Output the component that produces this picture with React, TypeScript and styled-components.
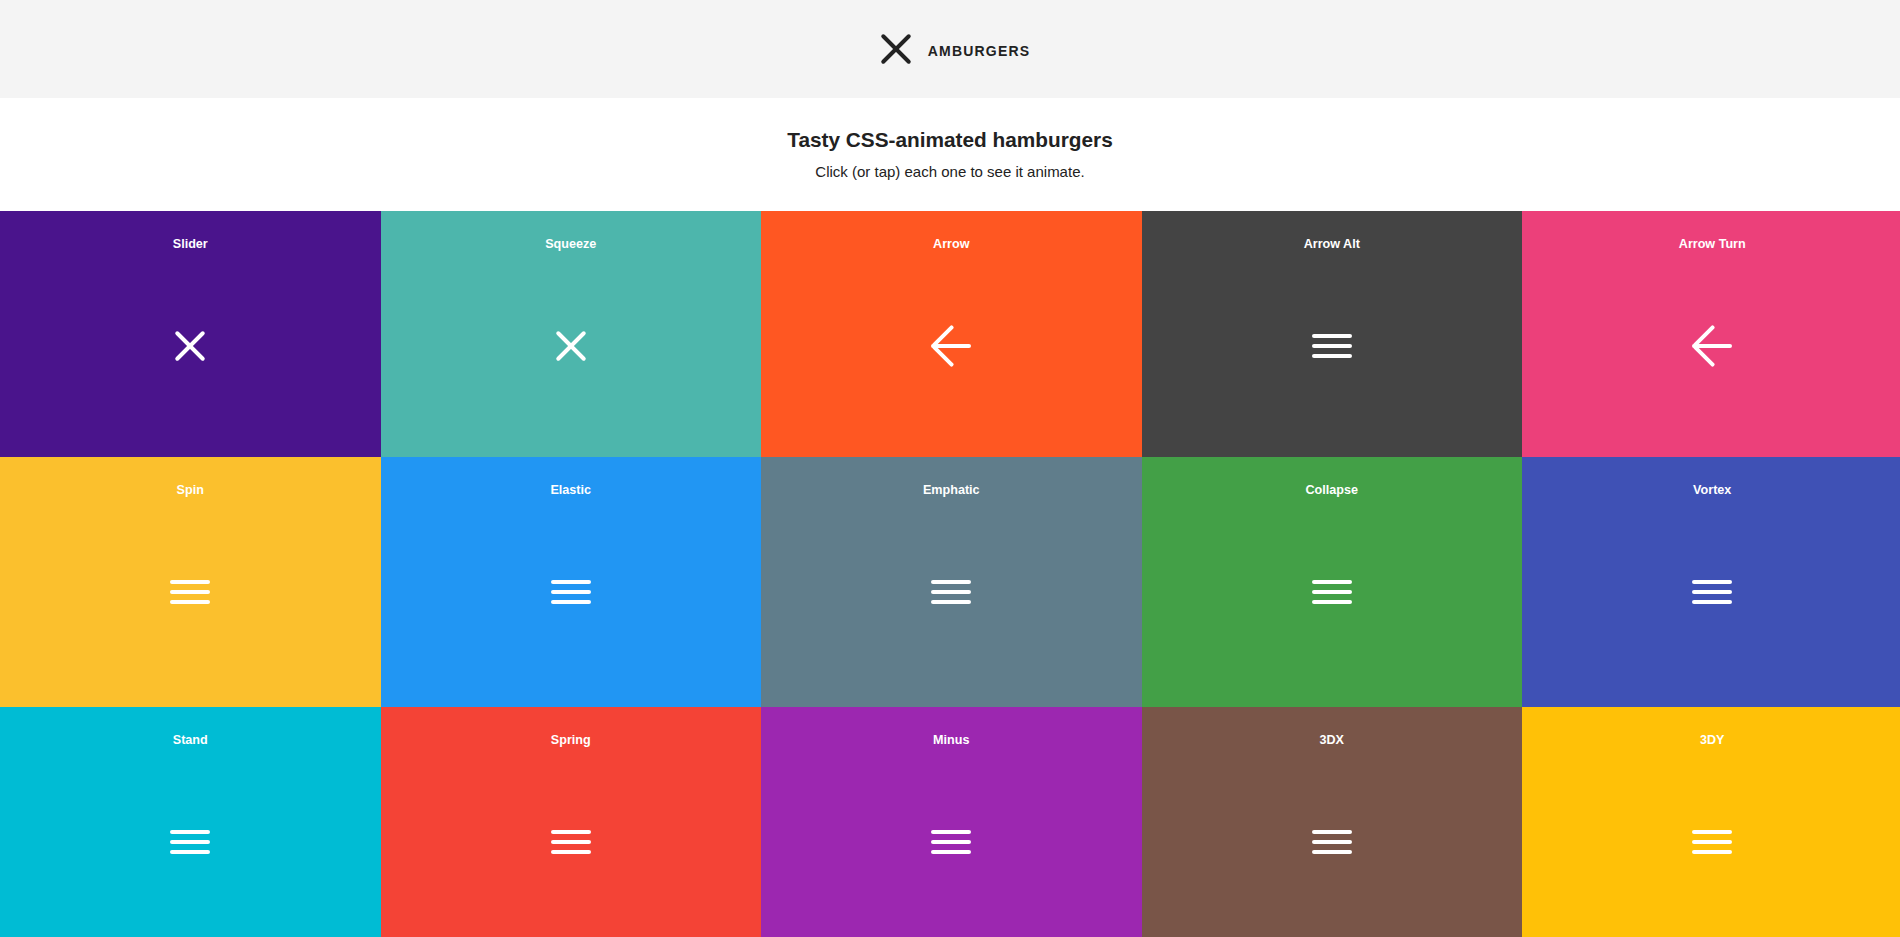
import React from "react";
import styled, { createGlobalStyle } from "styled-components";

const GlobalStyle = createGlobalStyle`
  html, body {
    margin: 0;
    padding: 0;
    overflow-x: hidden;
    scrollbar-width: none;
  }
  body::-webkit-scrollbar { display: none; }
  body {
    font-family: "Liberation Sans", Arial, Helvetica, sans-serif;
    color: #222;
    background: #fff;
  }
`;

type Variant = "x" | "arrow" | "lines";

const Header = styled.header`
  height: 98px;
  background: #f4f4f4;
  display: flex;
  align-items: center;
  justify-content: center;
  gap: 12px;
  padding-left: 6px;
  box-sizing: border-box;
`;

const Brand = styled.span`
  font-size: 14px;
  font-weight: 700;
  letter-spacing: 1.2px;
  color: #222;
  padding-top: 3px;
`;

const Intro = styled.section`
  padding: 30px 0 30px;
  text-align: center;
  display: flex;
  flex-direction: column;
  gap: 11px;
  height: 113px;
  box-sizing: border-box;
`;

const Title = styled.h1`
  margin: 0;
  font-size: 20.8px;
  line-height: 24px;
  font-weight: 700;
  color: #222;
`;

const Subtitle = styled.p`
  margin: 0;
  font-size: 15px;
  line-height: 18px;
  color: #222;
`;

const GridWrap = styled.div`
  width: 100%;
  overflow: hidden;
`;

const Grid = styled.div`
  display: grid;
  grid-template-columns: repeat(5, 380.5px);
  grid-template-rows: 246px 250px 250px;
`;

const Cell = styled.div<{ $bg: string }>`
  background: ${(p) => p.$bg};
  display: flex;
  flex-direction: column;
  align-items: center;
  padding-top: 25px;
  box-sizing: border-box;
`;

const Label = styled.div`
  font-size: 12.6px;
  line-height: 16px;
  font-weight: 700;
  color: #fff;
`;

const IconSlot = styled.div`
  margin-top: 82px;
`;

const Box = styled.div`
  width: 40px;
  height: 24px;
  display: flex;
  flex-direction: column;
  justify-content: space-between;
`;

const Bar = styled.span<{ $color: string; $t?: string; $hidden?: boolean }>`
  display: block;
  width: 40px;
  height: 4px;
  border-radius: 4px;
  background: ${(p) => p.$color};
  transform: ${(p) => p.$t || "none"};
  opacity: ${(p) => (p.$hidden ? 0 : 1)};
`;

function Hamburger({ variant, color = "#fff" }: { variant: Variant; color?: string }) {
  if (variant === "x") {
    return (
      <Box>
        <Bar $color={color} $t="translate(0, 10px) rotate(45deg)" />
        <Bar $color={color} $hidden />
        <Bar $color={color} $t="translate(0, -10px) rotate(-45deg)" />
      </Box>
    );
  }
  if (variant === "arrow") {
    return (
      <Box>
        <Bar $color={color} $t="translate(-8px, 0) rotate(-45deg) scale(0.7, 1)" />
        <Bar $color={color} />
        <Bar $color={color} $t="translate(-8px, 0) rotate(45deg) scale(0.7, 1)" />
      </Box>
    );
  }
  return (
    <Box>
      <Bar $color={color} />
      <Bar $color={color} />
      <Bar $color={color} />
    </Box>
  );
}

const items: { name: string; bg: string; v: Variant }[] = [
  { name: "Slider", bg: "#4a148c", v: "x" },
  { name: "Squeeze", bg: "#4db6ac", v: "x" },
  { name: "Arrow", bg: "#ff5722", v: "arrow" },
  { name: "Arrow Alt", bg: "#444444", v: "lines" },
  { name: "Arrow Turn", bg: "#ec407a", v: "arrow" },
  { name: "Spin", bg: "#fbc02d", v: "lines" },
  { name: "Elastic", bg: "#2196f3", v: "lines" },
  { name: "Emphatic", bg: "#607d8b", v: "lines" },
  { name: "Collapse", bg: "#43a047", v: "lines" },
  { name: "Vortex", bg: "#3f51b5", v: "lines" },
  { name: "Stand", bg: "#00bcd4", v: "lines" },
  { name: "Spring", bg: "#f44336", v: "lines" },
  { name: "Minus", bg: "#9c27b0", v: "lines" },
  { name: "3DX", bg: "#795548", v: "lines" },
  { name: "3DY", bg: "#ffc107", v: "lines" },
];

export default function App() {
  return (
    <>
      <GlobalStyle />
      <Header>
        <Hamburger variant="x" color="#222" />
        <Brand>AMBURGERS</Brand>
      </Header>
      <Intro>
        <Title>Tasty CSS-animated hamburgers</Title>
        <Subtitle>Click (or tap) each one to see it animate.</Subtitle>
      </Intro>
      <GridWrap>
        <Grid>
          {items.map((it) => (
            <Cell key={it.name} $bg={it.bg}>
              <Label>{it.name}</Label>
              <IconSlot>
                <Hamburger variant={it.v} />
              </IconSlot>
            </Cell>
          ))}
        </Grid>
      </GridWrap>
    </>
  );
}
